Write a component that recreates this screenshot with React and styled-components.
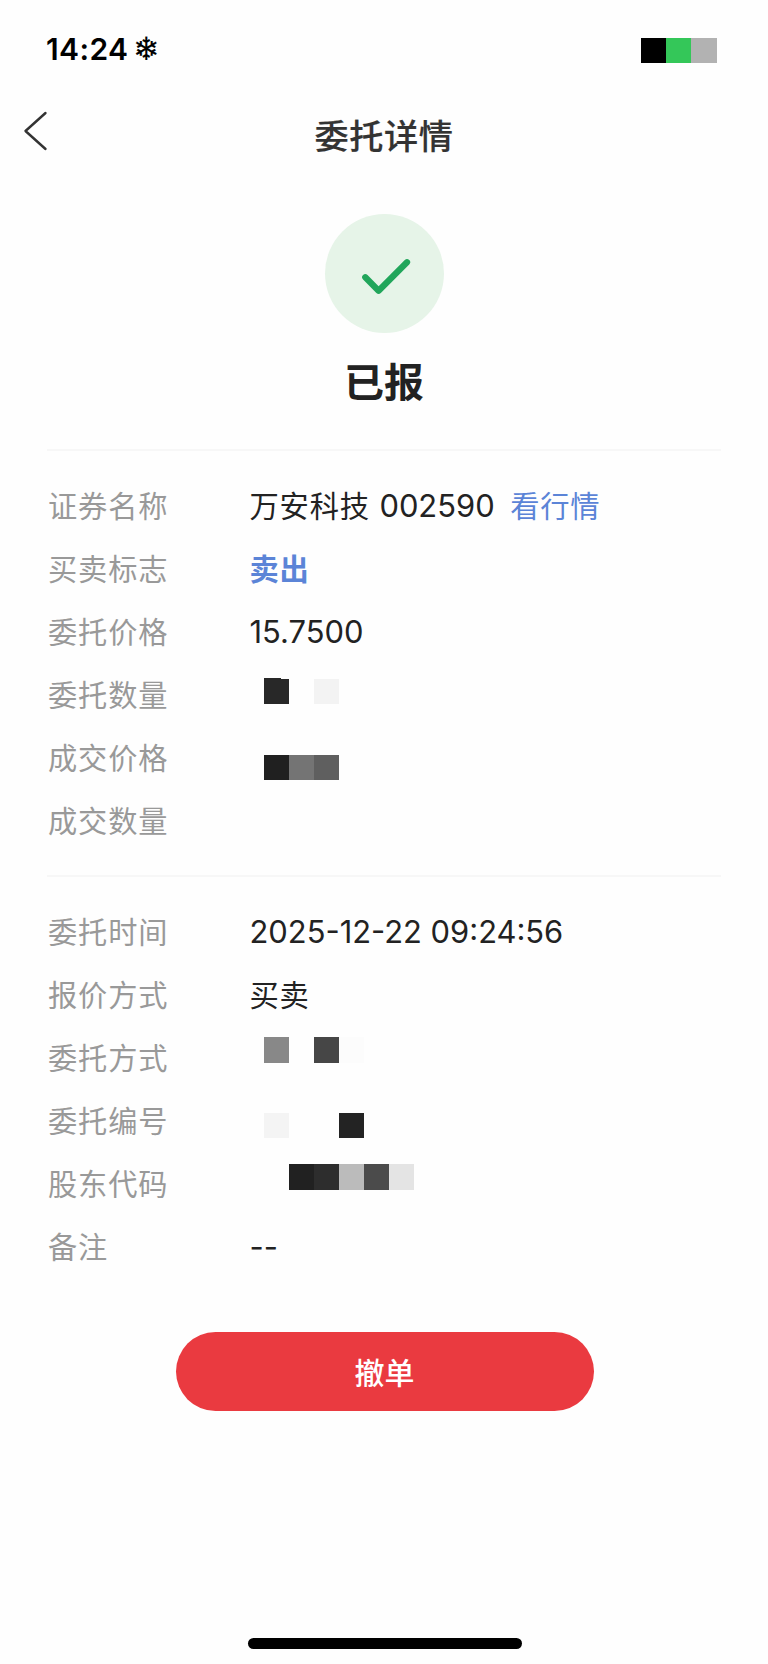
import React from 'react';
import styled, { createGlobalStyle, css } from 'styled-components';

const GlobalStyle = createGlobalStyle`
  * { box-sizing: border-box; }
  body {
    margin: 0;
    background: #fefefe;
    font-family: Inter, "Noto Sans CJK SC", sans-serif;
  }
`;

const Screen = styled.main`
  width: 768px;
  height: 1664px;
  display: flex;
  flex-direction: column;
  background: #fefefe;
  overflow: hidden;
`;

const StatusBar = styled.header`
  display: flex;
  justify-content: space-between;
  align-items: flex-start;
  height: 96px;
  padding: 38px 51.5px 0 46px;
`;

const Clock = styled.div`
  display: flex;
  align-items: center;
  gap: 4.5px;
  height: 22px;
  font-size: 30px;
  font-weight: 600;
  line-height: 22px;
  letter-spacing: 0.4px;
  color: #000;
`;

const Snowflake = styled.span`
  font-family: "DejaVu Sans", sans-serif;
  font-size: 32px;
  font-weight: 400;
  -webkit-text-stroke: 0.15px currentColor;
`;

const Mosaic = styled.div`
  display: flex;
  align-self: flex-start;
  margin-top: ${({ $top = 0 }) => $top}px;
  margin-left: ${({ $left = 0 }) => $left}px;
`;

const Cell = styled.span`
  position: relative;
  width: 25.1px;
  height: 25.4px;
  background: ${({ $color }) => $color};
  ${({ $lip }) =>
    $lip &&
    css`
      &::before {
        content: '';
        position: absolute;
        left: 0;
        top: -1px;
        width: 17px;
        height: 1px;
        background: inherit;
      }
    `}
`;

const NavBar = styled.nav`
  display: grid;
  grid-template-columns: 100px 1fr 100px;
  align-items: center;
  height: 80px;
`;

const BackButton = styled.button`
  display: flex;
  padding: 0 0 10px 22px;
  border: 0;
  background: none;
  color: #333;
`;

const Title = styled.h1`
  margin: 0;
  padding-top: 2px;
  font-size: 34.2px;
  font-weight: 500;
  line-height: 48px;
  letter-spacing: 0.6px;
  text-align: center;
  color: #333;
  -webkit-text-stroke: 0.2px currentColor;
`;

const Result = styled.section`
  display: flex;
  flex-direction: column;
  align-items: center;
  height: 273px;
  padding-top: 38px;
`;

const Badge = styled.div`
  display: flex;
  width: 119px;
  height: 119px;
  border-radius: 50%;
  background: #e6f4e8;
`;

const ResultText = styled.h2`
  margin: 20.5px 0 0;
  font-size: 40px;
  font-weight: 700;
  line-height: 58px;
  color: #222;
`;

const Details = styled.dl`
  display: grid;
  grid-auto-rows: 63.1px;
  height: ${({ $height }) => $height}px;
  margin: 0 47px;
  padding-top: 23px;
  border-top: 2px solid #f7f7f7;
`;

const Row = styled.div`
  display: grid;
  grid-template-columns: 202.5px 1fr;
  align-items: center;
  font-size: 29.3px;
  line-height: 44px;
  letter-spacing: 0.8px;
`;

const Label = styled.dt`
  padding-top: 2px;
  padding-left: 1px;
  font-size: 29.2px;
  letter-spacing: 0.9px;
  color: #999;
`;

const Value = styled.dd`
  display: flex;
  align-items: center;
  align-self: stretch;
  margin: 0;
  white-space: pre;
  color: #222;
`;

const Chinese = styled.span`
  padding-top: 2.5px;
`;

const Digits = styled.span`
  padding-top: 0.6px;
  margin-left: ${({ $gap = 0 }) => $gap}px;
  font-size: 30.9px;
  letter-spacing: 0;
`;

const SideText = styled(Chinese)`
  font-weight: 700;
  color: #5b84d7;
`;

const QuoteLink = styled.a`
  margin-left: 15.5px;
  padding-top: 2.5px;
  color: #5b84d7;
`;

const CancelButton = styled.button`
  align-self: center;
  width: 418px;
  height: 79px;
  margin-left: 1px;
  padding: 3px 0 0;
  border: 0;
  border-radius: 40px;
  background: #ea3a40;
  color: #fff;
  font-family: inherit;
  font-size: 30px;
  font-weight: 500;
  line-height: 44px;
`;

const HomeIndicator = styled.div`
  align-self: center;
  width: 274px;
  height: 10.5px;
  margin: auto 0 15.5px 1px;
  border-radius: 6px;
  background: #000;
`;

const Mask = ({ top, left, cells, lip }) => (
  <Mosaic $top={top} $left={left}>
    {cells.map((color, i) => (
      <Cell key={i} $color={color} $lip={lip && i === 0} />
    ))}
  </Mosaic>
);

const NONE = 'transparent';

const orderRows = [
  [
    '证券名称',
    <>
      <Chinese>万安科技</Chinese>
      <Digits $gap={9.5}>002590</Digits>
      <QuoteLink>看行情</QuoteLink>
    </>,
  ],
  ['买卖标志', <SideText>卖出</SideText>],
  ['委托价格', <Digits>15.7500</Digits>],
  ['委托数量', <Mask top={15.4} left={14.2} cells={['#282828', NONE, '#f3f3f3']} lip />],
  ['成交价格', <Mask top={28.6} left={14.2} cells={['#202020', '#747474', '#5f5f5f']} />],
  ['成交数量', null],
];

const recordRows = [
  ['委托时间', <Digits>2025-12-22 09:24:56</Digits>],
  ['报价方式', <Chinese>买卖</Chinese>],
  ['委托方式', <Mask top={11} left={14.2} cells={['#888', NONE, '#464646', '#fcfcfc']} />],
  ['委托编号', <Mask top={23.8} left={14.2} cells={['#f4f4f4', NONE, NONE, '#232323']} />],
  ['股东代码', <Mask top={11.8} left={39.3} cells={['#212121', '#2d2d2d', '#bbb', '#4b4b4b', '#e4e4e4']} />],
  ['备注', <Digits>--</Digits>],
];

const DetailList = ({ rows, height }) => (
  <Details $height={height}>
    {rows.map(([label, value]) => (
      <Row key={label}>
        <Label>{label}</Label>
        <Value>{value}</Value>
      </Row>
    ))}
  </Details>
);

export default function App() {
  return (
    <>
      <GlobalStyle />
      <Screen>
        <StatusBar>
          <Clock>
            14:24
            <Snowflake>❄</Snowflake>
          </Clock>
          <Mask cells={['#000', '#34c759', '#b2b2b2']} />
        </StatusBar>
        <NavBar>
          <BackButton aria-label="返回">
            <svg width="26" height="40" viewBox="0 0 26 40" fill="none" stroke="currentColor" strokeWidth="2.4" strokeLinecap="round" strokeLinejoin="round">
              <path d="M23.5 2L3.5 20L23.5 38" />
            </svg>
          </BackButton>
          <Title>委托详情</Title>
        </NavBar>
        <Result>
          <Badge>
            <svg width="119" height="119" viewBox="0 0 119 119" fill="none" stroke="#21a65b" strokeWidth="6.3" strokeLinecap="round" strokeLinejoin="round">
              <path d="M40.3 63.3L53.6 76.7L82 48.3" />
            </svg>
          </Badge>
          <ResultText>已报</ResultText>
        </Result>
        <DetailList rows={orderRows} height={426} />
        <DetailList rows={recordRows} height={457.3} />
        <CancelButton>撤单</CancelButton>
        <HomeIndicator />
      </Screen>
    </>
  );
}
